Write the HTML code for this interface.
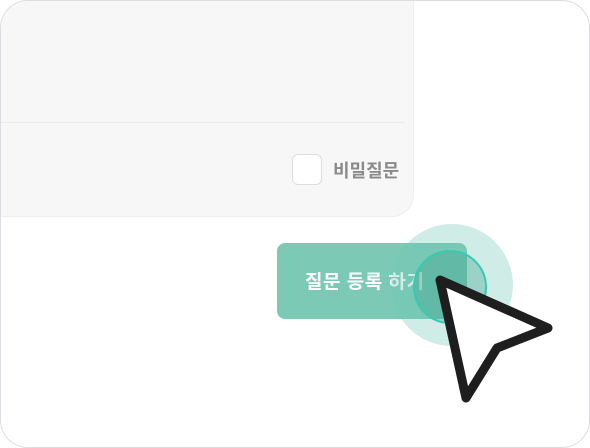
<!DOCTYPE html><html><head><meta charset="utf-8"><style>
body{margin:0;width:590px;height:448px;background:#fff;overflow:hidden;position:relative;font-family:"Liberation Sans","Noto Sans CJK KR",sans-serif}
.frame{position:absolute;left:0;top:0;width:588px;height:446px;border:1px solid #dcdde2;border-radius:28px;overflow:hidden;background:#fff}
.panel{position:absolute;left:-1px;top:-1px;width:413px;height:216px;background:#f7f7f7;border-bottom-right-radius:22px;border-right:1px solid #eee;border-bottom:1px solid #eee}
.line{position:absolute;left:0;top:122px;width:405px;height:1px;background:#ebebeb}
.cb{position:absolute;left:292px;top:154px;width:28px;height:29px;background:#fff;border:1px solid #ddd;border-radius:6px}
.lbl{position:absolute;left:333px;top:157px;font-size:18px;color:#8a8a8a;font-weight:bold}
.btn{position:absolute;left:276px;top:242px;width:190px;height:76px;background:#7ccab5;border-radius:8px}
.bt{position:absolute;left:304px;top:266px;font-size:19px;color:#fff;font-weight:bold;letter-spacing:0.5px}
</style></head><body>
<div class="frame">
<div class="panel"><div class="line"></div><div class="cb"></div><div class="lbl">비밀질문</div></div>
<div class="btn"></div><div class="bt">질문 등록 하기</div>
<svg width="590" height="448" style="position:absolute;left:-1px;top:-1px">
<circle cx="452" cy="285" r="61" fill="rgba(110,195,178,0.32)"/>
<circle cx="450" cy="287" r="36" fill="rgba(60,160,140,0.35)" stroke="#35cbb0" stroke-width="2"/>
<path d="M440 280 L548 328 L497 348 L466 398 Z" fill="#fff" stroke="#1e1e1e" stroke-width="9" stroke-linejoin="round"/>
</svg>
</div>
</body></html>
